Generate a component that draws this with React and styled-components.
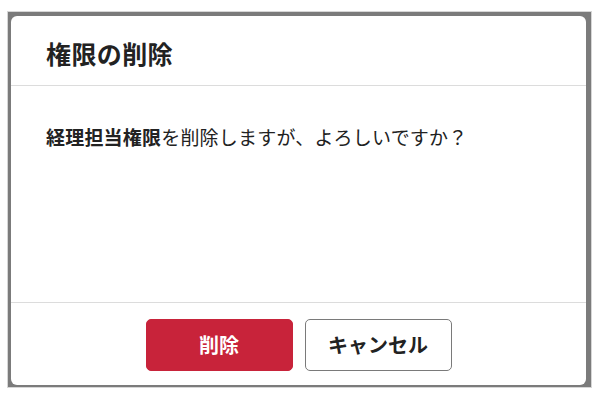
import styled, { createGlobalStyle } from "styled-components";

const GlobalStyle = createGlobalStyle`
    html, body {
        margin: 0;
        padding: 0;
        background: #ffffff;
        font-family: "Noto Sans CJK JP", "Noto Sans", sans-serif;
        color: #222;
    }
`;

const Page = styled.div`
    width: 601px;
    height: 398px;
    padding: 11px 0 0 7px;
    box-sizing: border-box;
`;

const Backdrop = styled.div`
    width: 585px;
    height: 377px;
    box-sizing: border-box;
    border: 1px solid #d6d6d6;
    background: #7b7b7b;
    padding: 4px 5px 2px 3px;
    display: flex;
`;

const Dialog = styled.div`
    flex: 1;
    background: #ffffff;
    border-radius: 6px;
    display: flex;
    flex-direction: column;
`;

const Header = styled.div`
    height: 70px;
    box-sizing: border-box;
    border-bottom: 1px solid #dcdcdc;
    display: flex;
    align-items: center;
    padding: 4px 35px 0;
`;

const Title = styled.h2`
    margin: 0;
    font-size: 25px;
    font-weight: 700;
    letter-spacing: 0.4px;
`;

const Body = styled.div`
    flex: 1;
    padding: 37px 35px 0;
    font-size: 19px;
    line-height: 28px;
    letter-spacing: 0.2px;
    border-bottom: 1px solid #dcdcdc;
`;

const Strong = styled.b`
    font-weight: 700;
`;

const Footer = styled.div`
    height: 82px;
    box-sizing: border-box;
    display: flex;
    justify-content: center;
    align-items: center;
    gap: 12px;
    padding-top: 1px;
`;

const Button = styled.button`
    width: 147px;
    height: 52px;
    border-radius: 5px;
    font-family: inherit;
    font-size: 20px;
    font-weight: 700;
    cursor: pointer;
    border: 1px solid ${(p) => (p.$danger ? "#c8233a" : "#7a7a7a")};
    background: ${(p) => (p.$danger ? "#c8233a" : "#ffffff")};
    color: ${(p) => (p.$danger ? "#ffffff" : "#222")};
`;

const App = () => {
    return (
        <Page>
            <GlobalStyle />
            <Backdrop>
                <Dialog>
                    <Header>
                        <Title>権限の削除</Title>
                    </Header>
                    <Body>
                        <Strong>経理担当権限</Strong>を削除しますが、よろしいですか？
                    </Body>
                    <Footer>
                        <Button $danger>削除</Button>
                        <Button>キャンセル</Button>
                    </Footer>
                </Dialog>
            </Backdrop>
        </Page>
    );
};

export default App;
